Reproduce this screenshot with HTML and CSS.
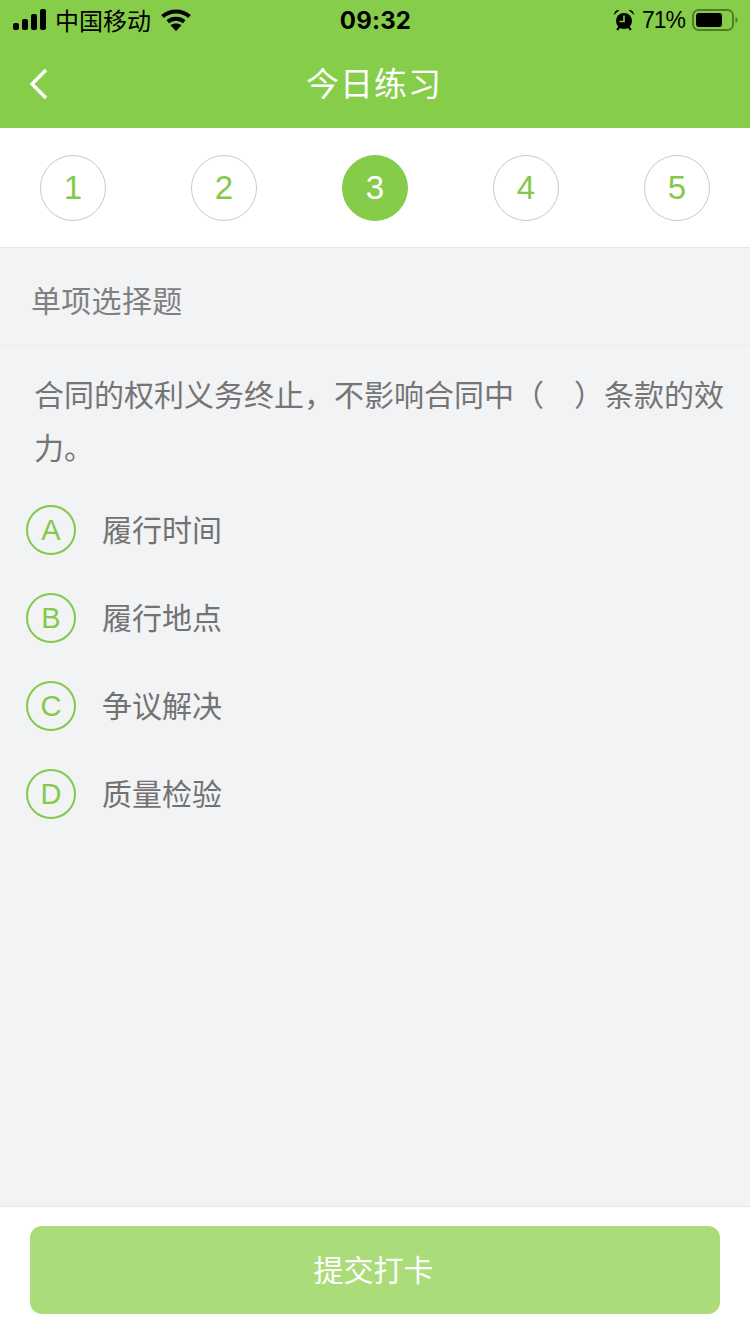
FILE: index.html
```html
<!DOCTYPE html>
<html lang="zh">
<head>
<meta charset="utf-8">
<title>今日练习</title>
<link rel="stylesheet" href="styles.css">
</head>
<body>
<div class="page">
  <header class="top">
    <div class="status">
      <div class="status-left">
        <svg class="signal" width="34" height="22" viewBox="0 0 34 22"><rect x="0" y="14" width="6" height="7" rx="2"/><rect x="9" y="10" width="6" height="11" rx="2"/><rect x="18" y="5" width="6" height="16" rx="2"/><rect x="27" y="0" width="6" height="21" rx="2"/></svg>
        <span class="carrier">中国移动</span>
        <svg class="wifi" width="30" height="22" viewBox="0 0 30 22" fill="none" stroke="#000" stroke-width="4"><path d="M1.500 7.500C9 .7 21 .7 28.500 7.500"/><path d="M6.800 12.800c4.600-4 11.800-4 16.400 0"/><path d="M15 22l-5.500-5.800c3-2.200 8-2.200 11 0z" fill="#000" stroke="none"/></svg>
      </div>
      <span class="time">09:32</span>
      <div class="status-right">
        <svg class="alarm" width="20" height="22" viewBox="0 0 20 22"><circle cx="10" cy="12" r="8"/><path d="M0 6C0 2.500 2.500.5 5.500 1zM20 6c0-3.500-2.500-5.500-5.500-5z"/><path d="M3 21l2.500-3M17 21l-2.500-3" stroke="#000" stroke-width="2"/><path d="M10 6.500V12.500H5.500" fill="none" stroke="#86ce4a" stroke-width="1.600"/></svg>
        <span class="pct">71%</span>
        <svg class="battery" width="46" height="22" viewBox="0 0 46 22"><rect x="1" y="1" width="40" height="20" rx="5.500" fill="none" stroke="#4d7f2a" stroke-width="2"/><rect x="4" y="4" width="26" height="14" rx="3"/><path d="M43.500 8c1.500.5 2 1.500 2 3s-.5 2.500-2 3z" fill="#4d7f2a"/></svg>
      </div>
    </div>
    <div class="nav">
      <svg class="back" width="20" height="32" viewBox="0 0 20 32" fill="none" stroke="#fff" stroke-width="3.400"><path d="M17 2L3 16l14 14"/></svg>
      <h1 class="title">今日练习</h1>
    </div>
  </header>

  <nav class="steps">
    <span class="step">1</span>
    <span class="step">2</span>
    <span class="step step-on">3</span>
    <span class="step">4</span>
    <span class="step">5</span>
  </nav>

  <main class="body">
    <div class="kind">单项选择题</div>
    <p class="question">合同的权利义务终止，不影响合同中（&emsp;）条款的效力。</p>
    <ul class="options">
      <li class="option"><span class="letter">A</span><span class="label">履行时间</span></li>
      <li class="option"><span class="letter">B</span><span class="label">履行地点</span></li>
      <li class="option"><span class="letter">C</span><span class="label">争议解决</span></li>
      <li class="option"><span class="letter">D</span><span class="label">质量检验</span></li>
    </ul>
  </main>

  <footer class="foot">
    <button class="submit" type="button">提交打卡</button>
  </footer>
</div>
</body>
</html>
```
FILE: styles.css
```css
* { box-sizing: border-box; }
html, body { margin: 0; padding: 0; }
body { font-family: "Liberation Sans", "Noto Sans CJK SC", sans-serif; }
.page { width: 750px; height: 1334px; display: flex; flex-direction: column; background: #f2f3f5; overflow: hidden; }

.top { height: 128px; background: #86ce4a; flex: none; }
.status { height: 40px; display: grid; grid-template-columns: 1fr auto 1fr; align-items: center; padding: 0 12px 0 13px; color: #000; }
.status-left { display: flex; align-items: center; }
.status-right { display: flex; align-items: center; justify-content: flex-end; }
.signal { margin-right: 8px; }
.carrier { font-size: 24px; margin-right: 10px; padding-bottom: 2px; }
.time { font-size: 24px; font-weight: 700; font-family: "Inter", "Liberation Sans", sans-serif; letter-spacing: 0.2px; padding-top: 1px; }
.alarm { margin-right: 8px; }
.pct { font-size: 23px; letter-spacing: -1px; margin-right: 7px; font-family: "Liberation Sans", sans-serif; }

.nav { height: 88px; display: flex; align-items: center; justify-content: center; position: relative; padding: 0 2px 4px 0; }
.back { position: absolute; left: 29px; top: 28px; }
.title { margin: 0; font-size: 33px; font-weight: 400; color: #fff; letter-spacing: 1px; }

.steps { height: 120px; flex: none; background: #fff; border-bottom: 1px solid #e8e8e8; display: flex; justify-content: space-between; padding: 27px 40px 0; }
.step { width: 66px; height: 66px; border: 1px solid #c8c8c8; border-radius: 50%; color: #84c94a; font-size: 33px; display: flex; align-items: center; justify-content: center; }
.step-on { background: #84cc4a; border-color: #84cc4a; color: #fff; }

.body { flex: 1; min-height: 0; }
.kind { height: 98px; padding: 4px 0 0 31px; display: flex; align-items: center; font-size: 30px; letter-spacing: 0.3px; color: #808080; border-bottom: 1px solid #ebecee; }
.question { margin: 0; padding: 23px 20px 0 34px; font-size: 30px; line-height: 53px; color: #757575; }
.options { list-style: none; margin: 30px 0 0; padding: 0 0 0 26px; display: flex; flex-direction: column; gap: 38px; }
.option { height: 50px; display: flex; align-items: center; gap: 27px; font-size: 30px; color: #727272; }
.label { padding-bottom: 4px; margin-left: -1px; }
.letter { width: 50px; height: 50px; border: 2px solid #84c94a; border-radius: 50%; color: #84c94a; font-size: 29px; display: flex; align-items: center; justify-content: center; }

.foot { height: 128px; flex: none; background: #fff; border-top: 1px solid #e6e6e6; padding: 19px 30px 0; }
.submit { display: block; width: 690px; height: 88px; border: 0; border-radius: 12px; background: #aadc79; color: #fff; font-family: inherit; font-size: 30px; padding: 0 3px 4px 0; }
```
